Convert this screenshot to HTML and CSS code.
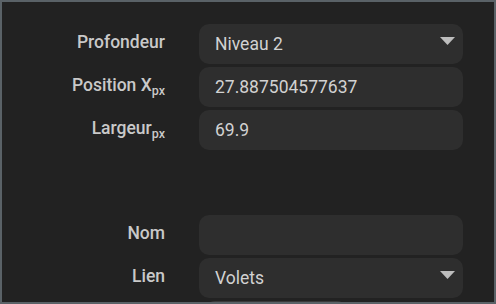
FILE: index.html
```html
<!DOCTYPE html>
<html>
<head>
    <title>Propriétés</title>
    <link rel="stylesheet" href="styles.css">
</head>
<body>
    <div class="panel">
        <div class="form">
            <label class="label">Profondeur</label>
            <div class="field select">
                <span>Niveau 2</span>
                <svg class="arrow" width="15" height="8" viewBox="0 0 15 8"><path d="M0 0 L15 0 L7.5 8 Z" fill="#bdbdbd"/></svg>
            </div>

            <label class="label">Position X<sub>px</sub></label>
            <div class="field"><span>27.887504577637</span></div>

            <label class="label">Largeur<sub>px</sub></label>
            <div class="field"><span>69.9</span></div>

            <div class="spacer"></div>

            <label class="label">Nom</label>
            <div class="field"><span></span></div>

            <label class="label">Lien</label>
            <div class="field select">
                <span>Volets</span>
                <svg class="arrow" width="15" height="8" viewBox="0 0 15 8"><path d="M0 0 L15 0 L7.5 8 Z" fill="#bdbdbd"/></svg>
            </div>

            <div></div>
            <div class="button"></div>
        </div>
    </div>
</body>
</html>
```

FILE: styles.css
```css
body {
    margin: 0;
    background-color: #222222;
    font-family: Roboto, "Liberation Sans", sans-serif;
}
.panel {
    width: 496px;
    height: 304px;
    box-sizing: border-box;
    border: 2px solid #5a6267;
    background-color: #222222;
    overflow: hidden;
}
.form {
    display: grid;
    grid-template-columns: 1fr 264px;
    column-gap: 34px;
    row-gap: 3px;
    padding: 22px 31px 0 0;
}
.label {
    justify-self: end;
    padding-top: 8px;
    font-size: 17.5px;
    line-height: 20px;
    font-weight: 500;
    color: #c9c9c9;
}
.label sub {
    font-size: 12.5px;
    vertical-align: -4px;
    line-height: 0;
}
.field {
    height: 40px;
    box-sizing: border-box;
    padding: 0 8px 0 16px;
    background-color: #2e2e2e;
    border-radius: 10px;
    display: flex;
    align-items: center;
    font-size: 17.5px;
    color: #d2d2d2;
}
.field span {
    flex: 1;
}
.select .arrow {
    margin-top: -6px;
}
.spacer {
    grid-column: 1 / 3;
    height: 59px;
}
.button {
    height: 30px;
    width: 142px;
    margin-left: 6px;
    background-color: #3a3a3a;
    border-radius: 10px;
}
```
